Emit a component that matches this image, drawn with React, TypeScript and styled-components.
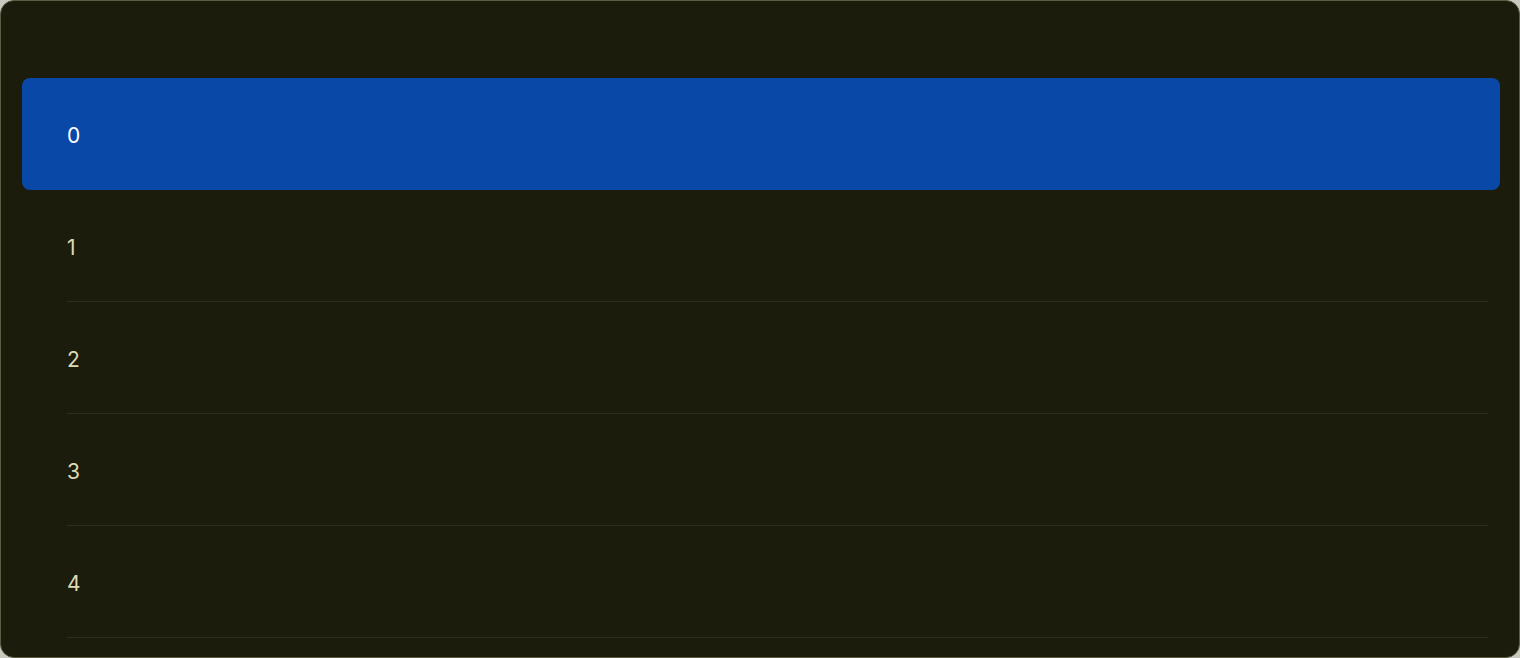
import React from "react";
import styled, { createGlobalStyle } from "styled-components";

const Global = createGlobalStyle`
  html, body { margin: 0; padding: 0; background: #c9c9c0; }
  body { font-family: Inter, "Noto Sans", "Liberation Sans", sans-serif; }
`;

const Window = styled.div`
  box-sizing: border-box;
  width: 1520px;
  height: 658px;
  background: #1c1c0c;
  border: 1px solid #5c5c44;
  border-radius: 14px;
  overflow: hidden;
  display: flex;
  flex-direction: column;
  padding: 77px 19px 0 21px;
`;

const List = styled.ul`
  list-style: none;
  margin: 0;
  padding: 0;
  display: flex;
  flex-direction: column;
`;

const Item = styled.li<{ $selected?: boolean }>`
  box-sizing: border-box;
  height: 112px;
  display: flex;
  align-items: center;
  padding-left: 45px;
  padding-right: 12px;
  border-radius: ${(p) => (p.$selected ? "8px" : "0")};
  background: ${(p) => (p.$selected ? "#0a48a8" : "transparent")};
  color: ${(p) => (p.$selected ? "#ffffff" : "#dcdab4")};
  font-size: 21px;
  position: relative;
  &::after {
    content: "";
    display: ${(p) => (p.$selected ? "none" : "block")};
    position: absolute;
    left: 45px;
    right: 12px;
    bottom: 0;
    height: 1px;
    background: #30301a;
  }
`;

const Label = styled.span`
  transform: translateY(1px);
`;

export default function App() {
  const items = [0, 1, 2, 3, 4];
  return (
    <>
      <Global />
      <Window>
        <List>
          {items.map((n) => (
            <Item key={n} $selected={n === 0}>
              <Label>{n}</Label>
            </Item>
          ))}
        </List>
      </Window>
    </>
  );
}
